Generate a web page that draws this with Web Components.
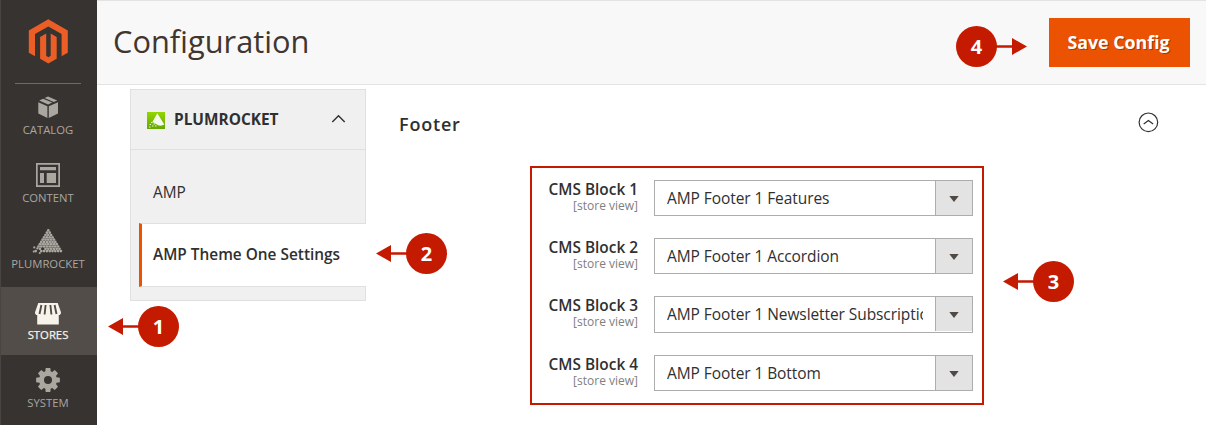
<!DOCTYPE html>
<html lang="en">
<head>
  <meta charset="UTF-8">
  <link rel="icon" href="data:," />
  <meta name="viewport" content="width=device-width, initial-scale=1.0">
  <title>Configuration</title>
  <style>
    * {
      box-sizing: border-box;
    }
    body {
      margin: 0;
      width: 1206px;
      height: 425px;
      overflow: hidden;
      background: #fff;
      color: #303030;
      font-family: "Open Sans", "Noto Sans", sans-serif;
    }
  </style>
</head>

<body>
  <admin-page>
    <admin-menu slot="menu">
      <menu-item icon="catalog" label="CATALOG"></menu-item>
      <menu-item icon="content" label="CONTENT"></menu-item>
      <menu-item icon="plumrocket" label="PLUMROCKET" style="--shift: -2px"></menu-item>
      <menu-item icon="stores" label="STORES" style="--shift: 1px" active></menu-item>
      <menu-item icon="system" label="SYSTEM" style="--shift: 1px"></menu-item>
    </admin-menu>
    <page-header slot="header" heading="Configuration">
      <save-button>Save Config</save-button>
    </page-header>
    <config-nav slot="nav" heading="PLUMROCKET">
      <nav-item>AMP</nav-item>
      <nav-item active>AMP Theme One Settings</nav-item>
    </config-nav>
    <config-section heading="Footer">
      <config-field label="CMS Block 1" value="AMP Footer 1 Features"></config-field>
      <config-field label="CMS Block 2" value="AMP Footer 1 Accordion"></config-field>
      <config-field label="CMS Block 3" value="AMP Footer 1 Newsletter Subscription" style="--height: 37px"></config-field>
      <config-field label="CMS Block 4" value="AMP Footer 1 Bottom"></config-field>
    </config-section>
  </admin-page>
  <step-marker number="1" style="left: 108px; top: 306px"></step-marker>
  <step-marker number="2" style="left: 376px; top: 233px"></step-marker>
  <step-marker number="3" style="left: 1003px; top: 261px"></step-marker>
  <step-marker number="4" style="left: 956px; top: 26px" right></step-marker>

  <script>
    // Base class: puts the markup of render() in an open shadow root
    class Base extends HTMLElement {
      connectedCallback() {
        if (this.shadowRoot) return;
        this.attachShadow({ mode: "open" });
        this.shadowRoot.innerHTML = `<style>* { box-sizing: border-box; }</style>${this.render()}`;
      }
      attr(name) {
        return this.getAttribute(name) || "";
      }
    }

    // Small balls of the Plumrocket pyramid, scattered at the lower left
    function pyramid() {
      let dots = "";
      for (let row = 0; row < 10; row++) {
        const y = 3.4 + row * 2.3;
        for (let i = 0; i <= row; i++) {
          const x = 16.3 - row * 1.4 + i * 2.8;
          if (row > 7 && x < 12 && (i + row) % 2 === 0) continue;
          dots += `<circle cx="${x}" cy="${y}" r="1.36"/>`;
        }
      }
      return dots + `<circle cx="2.3" cy="20.4" r="1.1"/><circle cx="5.3" cy="21.4" r="1.1"/><circle cx="1.8" cy="24.6" r="1.1"/><circle cx="7.8" cy="26" r="1.1"/>`;
    }

    const icons = {
      catalog: `<path d="M6.3 9.3 15.4 13.2V25L6.3 20.5ZM26 9.3 16.8 13.2V25L26 20.5ZM7.2 7.5 11.1 5.8 20.3 9.6 16.1 11.5ZM12.6 5.1 16 3.6 25.2 7.5 21.8 9Z"/>`,
      content: `<path fill-rule="evenodd" d="M4 2H28V26H4ZM5.7 3.7V24.3H26.3V3.7ZM8 6H24V9.3H8ZM8 12H12V22H8ZM14.7 12H24V22H14.7Z"/>`,
      plumrocket: pyramid(),
      stores: `<path d="M6.3 5H25.7L29 14.2Q29 17 26.8 17V26.6H5.2V17Q3 17 3 14.2Z"/>
        <path d="M9.4 7 7.5 16M13.6 7 12.6 16.5M18.4 7 19.4 16.5M22.6 7 24.5 16" fill="none" stroke="#524d49" stroke-width="1.9"/>`,
      system: `<path fill-rule="evenodd" d="${gear(16, 14)}M16 10a4 4 0 1 0 0 8a4 4 0 1 0 0-8Z"/>`
    };

    function gear(cx, cy) {
      const points = [];
      for (let i = 0; i < 8; i++) {
        [[-0.31, 9], [-0.19, 12.1], [0.19, 12.1], [0.31, 9]].forEach(([da, r]) => {
          const a = i * Math.PI / 4 + da;
          points.push(`${(cx + r * Math.sin(a)).toFixed(2)} ${(cy - r * Math.cos(a)).toFixed(2)}`);
        });
      }
      return `M${points.join("L")}Z`;
    }

    class AdminPage extends Base {
      render() {
        return `
          <style>
            :host { display: grid; grid-template-columns: 97px 1fr; height: 425px; }
            .main { display: grid; grid-template-rows: 85px 1fr; min-width: 0; }
            .content { display: grid; grid-template-columns: 236px 1fr; column-gap: 33px; padding: 4px 46px 0 33px; }
          </style>
          <slot name="menu"></slot>
          <div class="main">
            <slot name="header"></slot>
            <div class="content"><slot name="nav"></slot><slot></slot></div>
          </div>`;
      }
    }

    class AdminMenu extends Base {
      render() {
        return `
          <style>
            :host { display: block; background: #373330; border-left: 1px solid #4a4542; overflow: hidden; }
            .logo { display: flex; justify-content: center; height: 83px; padding: 19px 2px 0 0; }
            .logo svg { width: 40px; height: 45px; }
            hr { width: 66px; height: 1px; margin: 0 14px -1px; border: 0; background: #736963; }
          </style>
          <div class="logo">
            <svg viewBox="0 0 40 45" fill="#eb5e25">
              <path d="M20.3 .3 39.8 11.5V33.7L33.6 37.2V14.9L20.3 7.4 7 14.9V37.2L.8 33.7V11.5Z"/>
              <path d="M12.1 18 18.2 14.5V36.8L20.3 38.2 22.7 36.8V14.5L28.7 18V39.7L20.3 44.5 12.1 39.7Z"/>
            </svg>
          </div>
          <hr>
          <slot></slot>`;
      }
    }

    class MenuItem extends Base {
      render() {
        return `
          <style>
            :host { display: block; height: 68px; color: #aaa6a0; }
            :host([active]) { background: #524d49; color: #f7f3eb; }
            .inner { display: flex; flex-direction: column; align-items: center; padding: 10px 2px 0 0; position: relative; top: var(--shift, 0); }
            svg { width: 32px; height: 28px; fill: currentColor; }
            span { margin-top: 1px; font-size: 11.3px; line-height: 16px; white-space: nowrap; }
            :host([active]) span { -webkit-text-stroke: .25px currentColor; }
          </style>
          <div class="inner">
            <svg viewBox="0 0 32 28">${icons[this.attr("icon")]}</svg>
            <span>${this.attr("label")}</span>
          </div>`;
      }
    }

    class PageHeader extends Base {
      render() {
        return `
          <style>
            :host { display: flex; align-items: center; justify-content: space-between; padding: 0 16px 0 16px; background: #f8f8f8; border-top: 1px solid #e3e3e3; border-bottom: 1px solid #e3e3e3; }
            h1 { margin: -3px 0 0; font-size: 30.8px; font-weight: 400; line-height: 44px; color: #41362f; }
          </style>
          <h1>${this.attr("heading")}</h1>
          <slot></slot>`;
      }
    }

    class SaveButton extends Base {
      render() {
        return `
          <style>
            :host { display: block; }
            button { display: block; width: 141px; height: 49px; padding: 0 2px 0 0; border: 0; background: #eb5202; color: #fff; font: 700 17.8px/49px "Open Sans", sans-serif; text-shadow: 1px 1px 0 rgba(0, 0, 0, .3); }
          </style>
          <button><slot></slot></button>`;
      }
    }

    class ConfigNav extends Base {
      render() {
        return `
          <style>
            :host { display: block; height: 212px; background: #f0f0f0; border: 1px solid #e0e0e0; }
            header { display: flex; align-items: center; height: 60px; padding: 0 20px 0 16px; border-bottom: 1px solid #e0e0e0; }
            .badge { width: 18px; height: 17px; margin-top: 2px; }
            strong { flex: 1; margin: 0 0 0 9px; font-size: 15.4px; font-weight: 700; line-height: 20px; }
            .chevron { width: 15px; height: 9px; margin: -2px -1px 0 0; fill: none; stroke: #303030; stroke-width: 1.4; }
            .items { padding: 12px 0 0 8px; }
          </style>
          <header>
            <svg class="badge" viewBox="0 0 18 17">
              <defs><linearGradient id="g" x2="0" y2="1"><stop stop-color="#94d600"/><stop offset="1" stop-color="#65a800"/></linearGradient></defs>
              <rect width="18" height="17" fill="url(#g)"/>
              <path d="M10.3 1.3 17.3 12.5Q13 15 9 12L5.4 10Z" fill="#f4f9ec"/>
              <path d="M4 10.5h1.5M6.5 12h1.5M2.5 12.5h1.5M5 14h1.5M2 15h1.5M8 14h1.5" stroke="#e4f4cd" stroke-width="1.2"/>
            </svg>
            <strong>${this.attr("heading")}</strong>
            <svg class="chevron" viewBox="0 0 15 9"><path d="M1.3 8 7.5 1.7 13.7 8"/></svg>
          </header>
          <div class="items"><slot></slot></div>`;
      }
    }

    class NavItem extends Base {
      render() {
        return `
          <style>
            :host { display: block; height: 61px; padding-left: 14px; font-size: 15.4px; line-height: 61px; white-space: nowrap; }
            :host([active]) { height: 64px; margin-right: -1px; padding-left: 11px; line-height: 61px; background: #fff; border: 1px solid #e0e0e0; border-width: 1px 0 1px 3px; border-left-color: #eb5202; font-weight: 600; }
          </style>
          <slot></slot>`;
      }
    }

    class ConfigSection extends Base {
      render() {
        return `
          <style>
            :host { display: block; }
            header { display: flex; align-items: center; justify-content: space-between; height: 66px; padding-bottom: 1px; }
            h2 { margin: 5px 0 0; font-size: 18px; font-weight: 600; line-height: 24px; letter-spacing: .8px; }
            header svg { width: 22px; height: 22px; margin-right: 1px; fill: none; stroke: #303030; stroke-width: 1.2; }
            .fields { display: flex; flex-direction: column; gap: 22px; width: 454px; height: 239px; margin: 11px 0 0 131px; padding: 12px 9px 0; border: 2px solid #c41a00; }
          </style>
          <header>
            <h2>${this.attr("heading")}</h2>
            <svg viewBox="0 0 22 22"><circle cx="11.4" cy="11.3" r="9.3"/><path d="M6.7 12.9 11.4 9.6 16.1 12.9"/></svg>
          </header>
          <div class="fields"><slot></slot></div>`;
      }
    }

    class ConfigField extends Base {
      render() {
        return `
          <style>
            :host { display: flex; height: var(--height, 36px); }
            .label { width: 97px; text-align: right; white-space: nowrap; }
            b { display: block; font-size: 15.4px; font-weight: 600; line-height: 20px; }
            small { display: block; margin-top: -2px; font-size: 12px; line-height: 16px; color: #808080; }
            .select { display: flex; width: 319px; margin-left: 16px; background: #fff; border: 1px solid #adadad; }
            .value { flex: 1; min-width: 0; margin: 0 12px 0 12px; font-size: 15.5px; letter-spacing: -.08px; line-height: 35px; overflow: hidden; white-space: nowrap; }
            .arrow { display: flex; align-items: center; justify-content: center; width: 37px; height: 34px; background: #e3e3e3; border-left: 1px solid #adadad; }
            .arrow svg { width: 10px; height: 6px; margin-top: 2px; fill: #514943; }
          </style>
          <div class="label"><b>${this.attr("label")}</b><small>[store view]</small></div>
          <div class="select">
            <span class="value">${this.attr("value")}</span>
            <span class="arrow"><svg viewBox="0 0 10 6"><path d="M.3 0H9.7L5 6Z"/></svg></span>
          </div>`;
      }
    }

    // Numbered circle with an arrow, laid over the page
    class StepMarker extends Base {
      render() {
        return `
          <style>
            :host { position: absolute; display: flex; align-items: center; width: 71px; height: 41px; }
            :host([right]) { flex-direction: row-reverse; }
            svg { width: 31px; height: 17px; margin-right: -1px; fill: #c41a00; }
            :host([right]) svg { transform: scaleX(-1); margin: 0 0 0 -1px; }
            b { width: 41px; height: 41px; border-radius: 50%; background: #c41a00; color: #fff; font-size: 20px; font-weight: 700; line-height: 41px; text-align: center; }
          </style>
          <svg viewBox="0 0 31 17"><path d="M0 8.5 15 0V7.2H31V9.8H15V17Z"/></svg>
          <b>${this.attr("number")}</b>`;
      }
    }

    customElements.define("admin-page", AdminPage);
    customElements.define("admin-menu", AdminMenu);
    customElements.define("menu-item", MenuItem);
    customElements.define("page-header", PageHeader);
    customElements.define("save-button", SaveButton);
    customElements.define("config-nav", ConfigNav);
    customElements.define("nav-item", NavItem);
    customElements.define("config-section", ConfigSection);
    customElements.define("config-field", ConfigField);
    customElements.define("step-marker", StepMarker);
  </script>
</body>

</html>
